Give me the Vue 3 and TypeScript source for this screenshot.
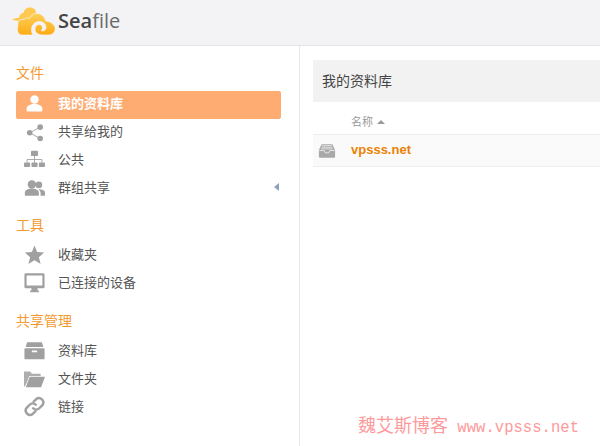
<script setup lang="ts">
interface NavItem { label: string; icon: string; active?: boolean; caret?: boolean }
interface NavGroup { title: string; items: NavItem[] }
const groups: NavGroup[] = [
  { title: '文件', items: [
    { label: '我的资料库', icon: 'user', active: true },
    { label: '共享给我的', icon: 'share' },
    { label: '公共', icon: 'org' },
    { label: '群组共享', icon: 'group', caret: true },
  ] },
  { title: '工具', items: [
    { label: '收藏夹', icon: 'star' },
    { label: '已连接的设备', icon: 'desktop' },
  ] },
  { title: '共享管理', items: [
    { label: '资料库', icon: 'archive' },
    { label: '文件夹', icon: 'folder' },
    { label: '链接', icon: 'link' },
  ] },
]
</script>

<template>
  <div class="page">
    <header class="top">
      <svg class="logo" width="44" height="28" viewBox="0 0 44 28">
        <defs>
          <linearGradient id="lg" x1="0" y1="0" x2="0" y2="1">
            <stop offset="0" stop-color="#fdd05a" />
            <stop offset="1" stop-color="#fdab13" />
          </linearGradient>
        </defs>
        <path fill="#fdc94e" d="M0 12.500C2 11 5 11 7 11C7 8 9 6 11.500 6C12 2.500 15 .5 18 .5C21.500 .5 24 3 24 5.500L24 10 10 15C7 14 3 13.500 0 12.500Z" />
        <path fill="url(#lg)" stroke="#f3f3f6" stroke-width=".7" d="M6 15C7 12.500 10 12 12.500 12.500C13.500 10 15.500 11 17.500 11.500C19 8 22.500 6 26 6.500C30 7 33 10 33.500 14C37 14 41 16 43 20C44 24 41 28 37 28H31C27 28 23 26 23 22C23 19 25 17.500 27 17.500C29 17.500 30.500 19 30.500 21C30.500 22 30 23 29 23.500C31 24.500 34 23.500 34 20.500C34 17 31 14.500 27.500 14.500C23 14.500 19.500 18 19.500 22.500C19.500 24.500 20 26.500 21 28H10C7 28 5 25 5.500 21.500C5.800 19 6 17 6 15Z" />
      </svg>
      <span class="brand"><b>Sea</b>file</span>
    </header>
    <div class="body">
      <aside class="side">
        <section v-for="g in groups" :key="g.title" class="group">
          <h3 class="title">{{ g.title }}</h3>
          <ul class="list">
            <li v-for="it in g.items" :key="it.label" class="row" :class="{ active: it.active }">
              <span class="ic">
                <svg width="24" height="24" viewBox="0 0 24 24" fill="currentColor">
                  <template v-if="it.icon === 'user'">
                    <circle cx="12" cy="7.500" r="4.800" />
                    <path d="M3 20v-2.500C3 14.500 7 13.500 9.500 12.500h5C17 13.500 21 14.500 21 17.500V20a1 1 0 0 1-1 1H4a1 1 0 0 1-1-1Z" />
                  </template>
                  <template v-else-if="it.icon === 'share'">
                    <circle cx="18.500" cy="7" r="3.200" />
                    <circle cx="18.500" cy="20" r="3.200" />
                    <circle cx="6.500" cy="13.500" r="3.200" />
                    <path d="M6.500 13.500 18.500 7M6.500 13.500 18.500 20" stroke="currentColor" stroke-width="1" />
                  </template>
                  <template v-else-if="it.icon === 'org'">
                    <rect x="8" y="2" width="8" height="6" rx="1" />
                    <rect x="0" y="15.500" width="7" height="5" rx="1" />
                    <rect x="8.500" y="15.500" width="7" height="5" rx="1" />
                    <rect x="17" y="15.500" width="7" height="5" rx="1" />
                    <path d="M3.500 15.500v-3.500h17v3.500M12 8v7.500" fill="none" stroke="currentColor" stroke-width="1" />
                  </template>
                  <template v-else-if="it.icon === 'group'">
                    <circle cx="17" cy="9" r="3.800" />
                    <path d="M17 14c3 0 7 1 7 4v2.500a1 1 0 0 1-1 1h-4v-3c0-2-1-3.500-2.500-4.300Z" />
                    <circle cx="9" cy="8.500" r="4.800" />
                    <path d="M1 20.500V18c0-3 3-4 5.500-4.500h5c2.500.500 5.500 1.500 5.500 4.500v2.500a1 1 0 0 1-1 1H2a1 1 0 0 1-1-1Z" />
                  </template>
                  <template v-else-if="it.icon === 'star'">
                    <path d="M12 1.800 15 9.200 23 9.800 17 15 19 22.800 12 18.500 5 22.800 7 15 1 9.800 9 9.200Z" />
                  </template>
                  <template v-else-if="it.icon === 'desktop'">
                    <path fill-rule="evenodd" d="M2 1.500h20a1.500 1.500 0 0 1 1.500 1.500v14a1.500 1.500 0 0 1-1.500 1.500H2A1.500 1.500 0 0 1 .5 17V3A1.500 1.500 0 0 1 2 1.500ZM3 4V15.500h18V4Z" />
                    <path d="M8.500 18h7v3h1.500v2H7v-2h1.500Z" />
                  </template>
                  <template v-else-if="it.icon === 'archive'">
                    <path d="M3.500 2.500h17L22 8H2Z" />
                    <path fill-rule="evenodd" d="M1.500 9.500h21a1 1 0 0 1 1 1V21a1 1 0 0 1-1 1h-21a1 1 0 0 1-1-1V10.500a1 1 0 0 1 1-1ZM9 12v2h6V12Z" />
                  </template>
                  <template v-else-if="it.icon === 'folder'">
                    <path d="M0 4h7l2 2.500h10v2.500H6L3 17 .8 21H0Z" opacity=".85" />
                    <path d="M6.500 10H24l-4.500 12H2Z" />
                  </template>
                  <template v-else>
                    <g fill="none" stroke="currentColor" stroke-width="2.800" stroke-linecap="round">
                      <path d="M11 6.500l3-3a5 5 0 0 1 7 7l-3.500 3.500a5 5 0 0 1-7 0" />
                      <path d="M13 17.500l-3 3a5 5 0 0 1-7-7l3.500-3.500a5 5 0 0 1 7 0" />
                    </g>
                  </template>
                </svg>
              </span>
              <span class="label">{{ it.label }}</span>
              <i v-if="it.caret" class="caret"></i>
            </li>
          </ul>
        </section>
      </aside>
      <main class="main">
        <h2 class="head">我的资料库</h2>
        <div class="cols"><span>名称</span><i class="up"></i></div>
        <div class="lib">
          <svg class="lib-ic" width="18" height="18" viewBox="0 0 20 20">
            <path d="M4 2.500h12l3 6.500v7.500a1 1 0 0 1-1 1H2a1 1 0 0 1-1-1V9Z" fill="#a9a9a9" />
            <path d="M4.500 4h11M4 5.800h12M3.500 7.600h13" stroke="#e4e4e4" stroke-width="1" />
            <path d="M1.500 9.500h5.500l1 2.500h4l1-2.500h5.500" fill="none" stroke="#ececec" stroke-width="1" />
          </svg>
          <a class="name">vpsss.net</a>
        </div>
      </main>
    </div>
    <div class="mark">魏艾斯博客<span class="url"> www.vpsss.net</span></div>
  </div>
</template>

<style>
html, body { margin: 0; background: #fff; overflow: hidden; }
</style>

<style scoped>
.page {
  position: relative;
  width: 600px;
  height: 446px;
  overflow: hidden;
  display: flex;
  flex-direction: column;
  font-family: "Liberation Sans", Arial, "Noto Sans CJK SC", sans-serif;
  font-size: 13px;
  color: #555;
}
.top {
  flex: none;
  box-sizing: border-box;
  background: #f3f3f6;
  border-bottom: 1px solid #e4e4e4;
  height: 46px;
  display: flex;
  align-items: center;
  padding-left: 12px;
  padding-bottom: 5px;
}
.logo { flex: none; margin-top: 1px; }
.brand {
  margin-left: 2px;
  margin-top: 1px;
  font-family: "Open Sans", sans-serif;
  font-size: 20px;
  color: #6a6a6a;
}
.brand b { font-weight: 600; color: #454545; }
.body { flex: 1; display: flex; min-height: 0; }
.side {
  width: 300px;
  flex: none;
  box-sizing: border-box;
  border-right: 1px solid #e8e8e8;
  padding: 16px 18px 0 16px;
}
.group { margin-bottom: 11px; }
.group:nth-child(2) { margin-bottom: 12px; }
.group + .group .title { height: 28px; }
.title {
  margin: 0;
  height: 29px;
  line-height: 22px;
  font-size: 14px;
  font-weight: 400;
  color: #f49a30;
}
.list { list-style: none; margin: 0; padding: 0; }
.row {
  height: 28px;
  display: flex;
  align-items: center;
  padding-bottom: 4px;
  box-sizing: border-box;
  border-radius: 2px;
}
.row.active { background: #ffac73; color: #fff; font-weight: 700; }
.ic {
  width: 37px;
  margin-right: 5px;
  flex: none;
  display: flex;
  justify-content: center;
  color: #a0a0a0;
}
.active .ic { color: #fff; }
.ic svg { width: 21px; height: 21px; }
.label { flex: 1; margin-top: -2px; }
.caret {
  width: 0;
  height: 0;
  margin-right: 2px;
  border-style: solid;
  border-width: 4.500px 5px 4.500px 0;
  border-color: transparent #8da2b8 transparent transparent;
}
.main { flex: 1; min-width: 0; padding: 14px 0 0 13px; }
.head {
  margin: 0;
  height: 42px;
  line-height: 43px;
  padding-left: 9px;
  background: #f2f2f2;
  font-size: 14px;
  font-weight: 400;
  color: #444;
}
.cols {
  height: 33px;
  box-sizing: border-box;
  padding: 12px 0 0 38px;
  display: flex;
  align-items: flex-start;
  gap: 4px;
  font-size: 11px;
  line-height: 16px;
  color: #999;
  border-bottom: 1px solid #eee;
}
.up {
  width: 0;
  height: 0;
  margin-top: 6px;
  border-style: solid;
  border-width: 0 4px 4px 4px;
  border-color: transparent transparent #999 transparent;
}
.lib {
  height: 32px;
  box-sizing: border-box;
  background: #fafafa;
  border-bottom: 1px solid #eee;
  display: flex;
  align-items: center;
  padding-left: 5px;
  padding-top: 1px;
}
.lib-ic { flex: none; }
.name {
  margin-left: 15px;
  margin-top: -4px;
  font-size: 13px;
  font-weight: 700;
  color: #eb8205;
}
.mark {
  position: absolute;
  left: 358px;
  top: 413px;
  white-space: pre;
  font-family: "Noto Sans CJK SC", sans-serif;
  font-size: 18px;
  line-height: 22px;
  color: #fd9a9c;
}
.url {
  font-family: "Liberation Mono", monospace;
  font-size: 15.600px;
}
</style>
